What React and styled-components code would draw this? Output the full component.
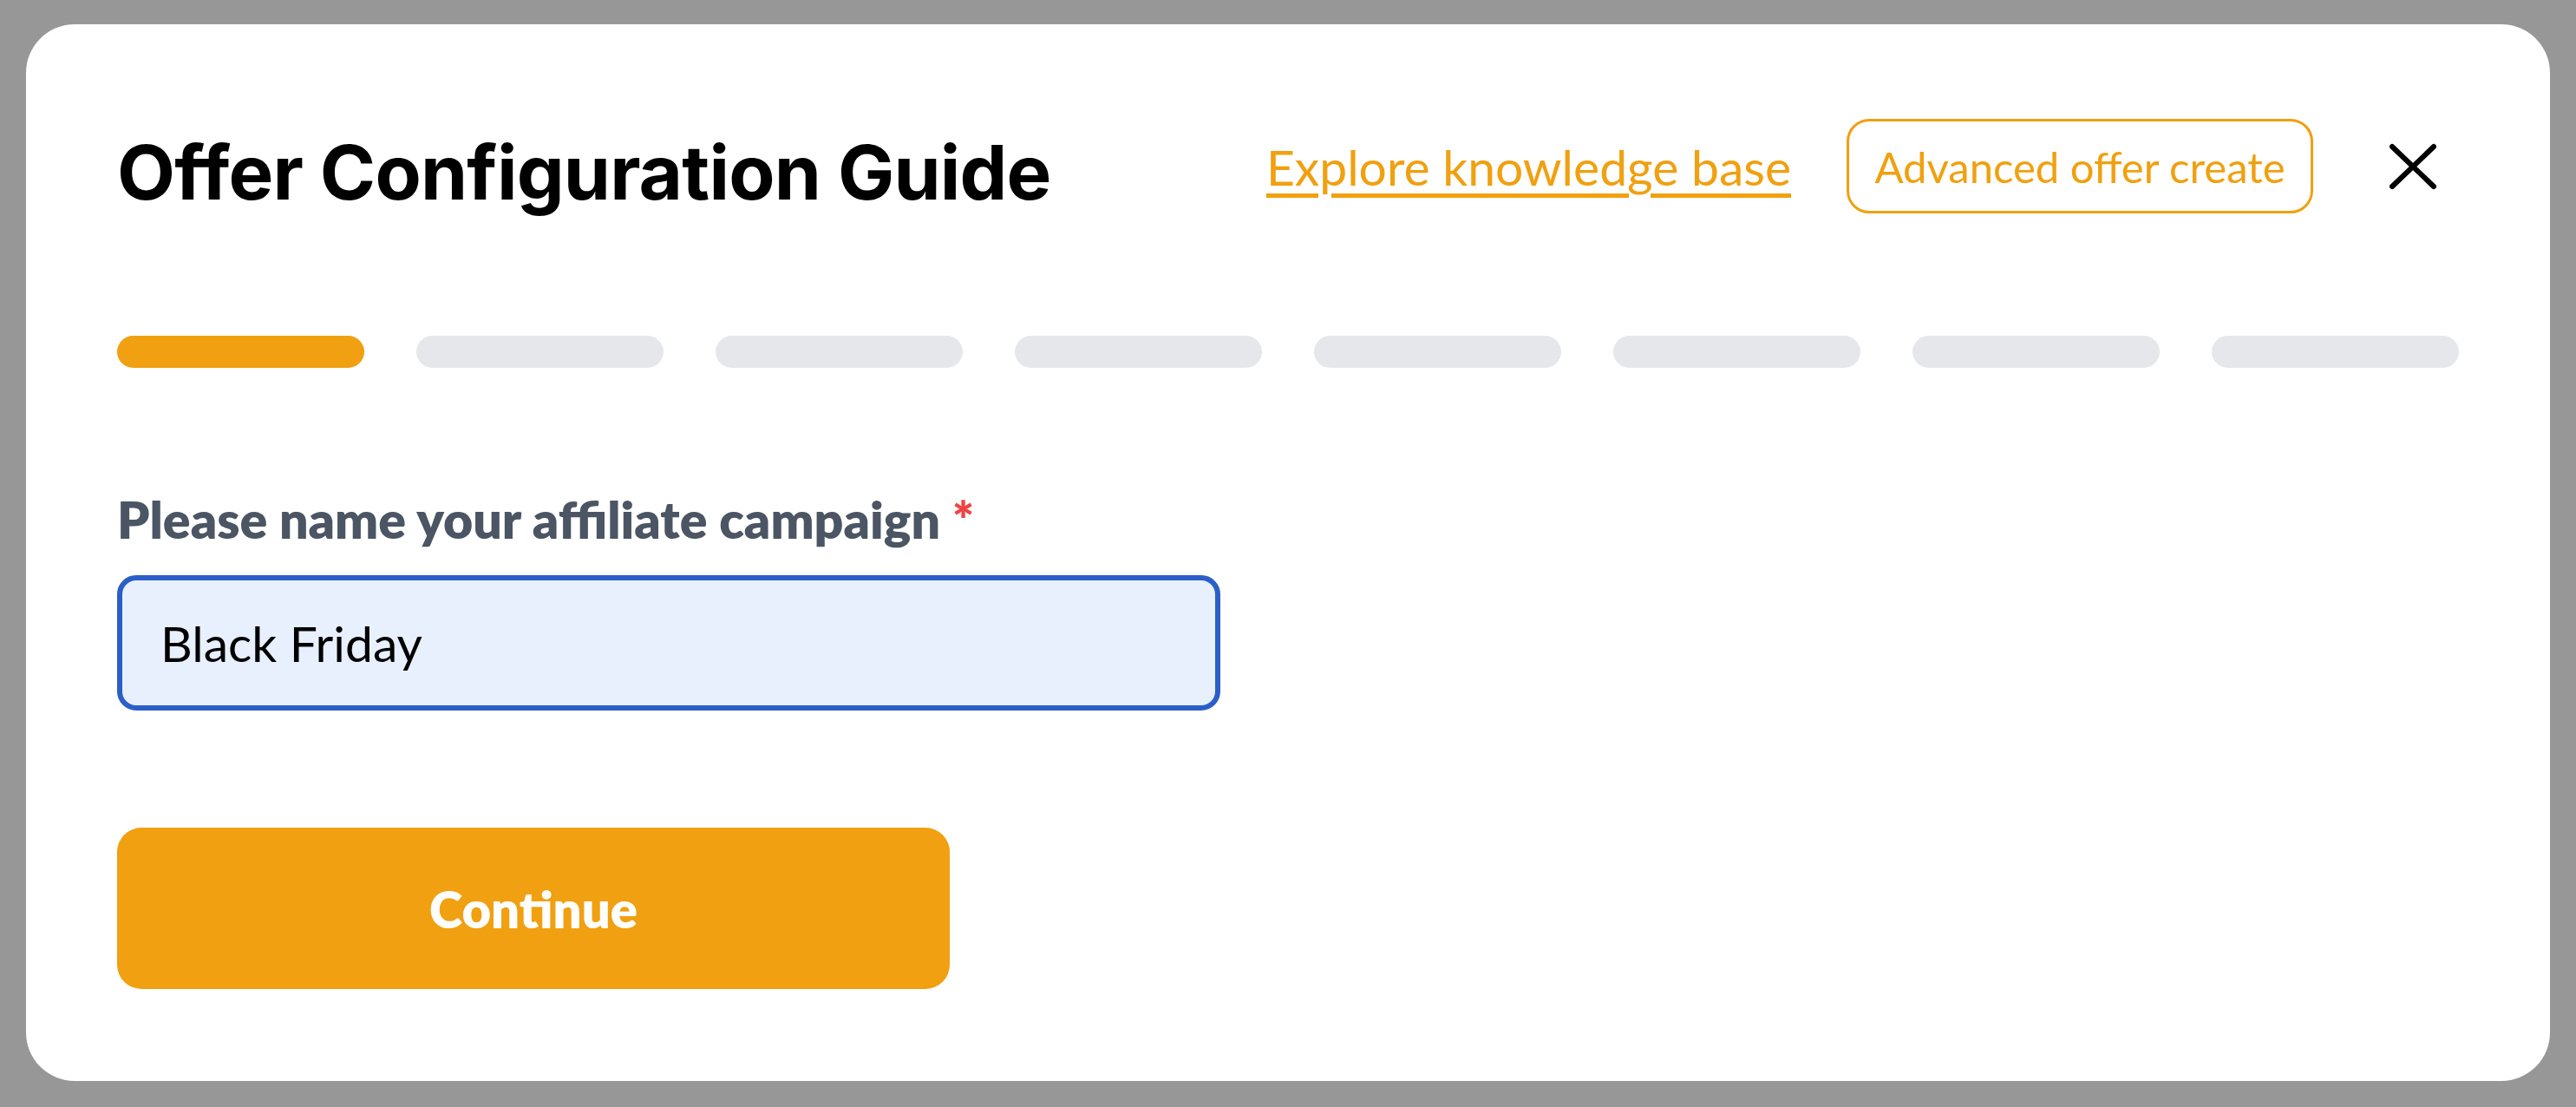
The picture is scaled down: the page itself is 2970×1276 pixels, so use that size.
import React from 'react';
import styled, { createGlobalStyle } from 'styled-components';

const GlobalStyle = createGlobalStyle`
  html, body {
    margin: 0;
    padding: 0;
    background: #979797;
  }
  * {
    box-sizing: border-box;
  }
`;

const Backdrop = styled.div`
  width: 100%;
  height: 1276px;
  padding: 28px 30px 30px 30px;
  background: #979797;
  display: flex;
  align-items: flex-start;
`;

const Modal = styled.div`
  width: 100%;
  height: 1218px;
  background: #fff;
  border-radius: 56px;
  padding: 109px 105px 105px 105px;
  display: flex;
  flex-direction: column;
`;

const Header = styled.div`
  display: flex;
  justify-content: space-between;
  align-items: center;
  height: 109px;
`;

const Title = styled.h1`
  margin: 0;
  font-family: Inter, "Noto Sans", sans-serif;
  font-weight: 700;
  font-size: 87px;
  letter-spacing: -0.8px;
  color: #000;
  padding-top: 14px;
`;

const HeaderRight = styled.div`
  display: flex;
  align-items: center;
`;

const KnowledgeLink = styled.a`
  font-family: Lato, "Noto Sans", sans-serif;
  font-size: 57px;
  color: #f0a010;
  text-decoration: underline;
  text-decoration-thickness: 5px;
  text-underline-offset: 9px;
  margin-right: 64px;
  cursor: pointer;
`;

const OutlineButton = styled.button`
  height: 109px;
  width: 538px;
  border: 3px solid #f0a010;
  border-radius: 26px;
  background: #fff;
  color: #f0a010;
  font-family: Lato, "Noto Sans", sans-serif;
  font-size: 49px;
  cursor: pointer;
`;

const CloseButton = styled.button`
  border: none;
  background: none;
  padding: 0;
  margin: 0 25px 0 87px;
  width: 56px;
  height: 54px;
  display: flex;
  cursor: pointer;
`;

const Steps = styled.div`
  display: grid;
  grid-template-columns: repeat(8, 1fr);
  gap: 60px;
  margin-top: 141px;
`;

const Step = styled.div`
  height: 37px;
  border-radius: 19px;
  background: ${(p) => (p.active ? '#f0a010' : '#e5e7eb')};
`;

const Field = styled.div`
  margin-top: 140px;
  display: flex;
  flex-direction: column;
`;

const Label = styled.label`
  font-family: Lato, "Noto Sans", sans-serif;
  font-weight: 800;
  font-size: 59px;
  line-height: 70px;
  color: #4b5563;
`;

const Required = styled.span`
  color: #ef4444;
  margin-left: 14px;
`;

const Input = styled.input`
  margin-top: 29px;
  width: 1272px;
  height: 156px;
  border: 6px solid #2b5fc7;
  border-radius: 22px;
  background: #e8f0fe;
  padding: 0 44px;
  font-family: Lato, "Noto Sans", sans-serif;
  font-size: 57px;
  color: #000;
  outline: none;
`;

const PrimaryButton = styled.button`
  margin-top: 135px;
  width: 960px;
  height: 186px;
  border: none;
  border-radius: 28px;
  background: #f0a010;
  color: #fff;
  font-family: Lato, "Noto Sans", sans-serif;
  font-weight: 800;
  font-size: 58px;
  cursor: pointer;
`;

const steps = [true, false, false, false, false, false, false, false];

const App = () => {
  return (
    <>
      <GlobalStyle />
      <Backdrop>
        <Modal>
          <Header>
            <Title>Offer Configuration Guide</Title>
            <HeaderRight>
              <KnowledgeLink>Explore knowledge base</KnowledgeLink>
              <OutlineButton>Advanced offer create</OutlineButton>
              <CloseButton aria-label="Close">
                <svg width="56" height="54" viewBox="0 0 56 54">
                  <path d="M4 4 L52 50 M52 4 L4 50" stroke="#000" strokeWidth="6" strokeLinecap="round" />
                </svg>
              </CloseButton>
            </HeaderRight>
          </Header>
          <Steps>
            {steps.map((active, i) => (
              <Step key={i} active={active} />
            ))}
          </Steps>
          <Field>
            <Label>
              Please name your affiliate campaign<Required>*</Required>
            </Label>
            <Input defaultValue="Black Friday" />
          </Field>
          <div>
            <PrimaryButton>Continue</PrimaryButton>
          </div>
        </Modal>
      </Backdrop>
    </>
  );
};

export default App;
